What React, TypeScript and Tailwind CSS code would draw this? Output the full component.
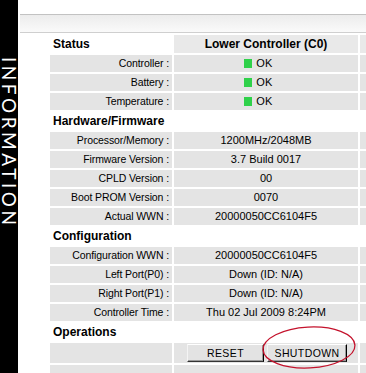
import type { ReactNode } from 'react'

type Item =
  | { kind: 'section'; title: string }
  | { kind: 'data'; label: string; value: string; ok?: boolean }

const items: Item[] = [
  { kind: 'data', label: 'Controller :', value: 'OK', ok: true },
  { kind: 'data', label: 'Battery :', value: 'OK', ok: true },
  { kind: 'data', label: 'Temperature :', value: 'OK', ok: true },
  { kind: 'section', title: 'Hardware/Firmware' },
  { kind: 'data', label: 'Processor/Memory :', value: '1200MHz/2048MB' },
  { kind: 'data', label: 'Firmware Version :', value: '3.7 Build 0017' },
  { kind: 'data', label: 'CPLD Version :', value: '00' },
  { kind: 'data', label: 'Boot PROM Version :', value: '0070' },
  { kind: 'data', label: 'Actual WWN :', value: '20000050CC6104F5' },
  { kind: 'section', title: 'Configuration' },
  { kind: 'data', label: 'Configuration WWN :', value: '20000050CC6104F5' },
  { kind: 'data', label: 'Left Port(P0) :', value: 'Down (ID: N/A)' },
  { kind: 'data', label: 'Right Port(P1) :', value: 'Down (ID: N/A)' },
  { kind: 'data', label: 'Controller Time :', value: 'Thu 02 Jul 2009 8:24PM' },
  { kind: 'section', title: 'Operations' },
]

function Section({ title }: { title: string }) {
  return (
    <>
      <div className="h-[18px] flex items-center pl-[3px] text-[12px] font-bold">{title}</div>
      <div className="h-[18px]" />
      <div className="h-[18px]" />
    </>
  )
}

function Data({ label, children }: { label: string; children: ReactNode }) {
  return (
    <>
      <div className="h-[17px] bg-[#e4e4e4] flex items-center justify-end pr-[3px] text-[10.5px] tracking-[-0.1px]">{label}</div>
      <div className="h-[17px] bg-[#e4e4e4] flex items-center justify-center text-[11px]">{children}</div>
      <div className="h-[17px] bg-[#e4e4e4]" />
    </>
  )
}

function Btn({ label, width }: { label: string; width: string }) {
  return (
    <button
      className={`${width} h-[18px] bg-[#e3e3e3] border border-t-white border-l-[#f4f4f4] border-r-black border-b-[#333] shadow-[inset_-1px_-1px_0_#9a9a9a] text-[10.5px] tracking-[0.4px] leading-none text-black`}
    >
      {label}
    </button>
  )
}

export default function App() {
  return (
    <div className="relative w-[366px] h-[373px] overflow-hidden bg-white flex font-['Liberation_Sans',Arial,sans-serif] text-black">
      <div className="w-[18px] shrink-0 bg-black flex justify-center pt-[57px]">
        <span className="[writing-mode:vertical-rl] text-white font-['Lato',sans-serif] font-normal text-[19px] tracking-[3.5px] leading-[16px]">
          INFORMATION
        </span>
      </div>

      <div className="ml-[2px] flex-1 flex flex-col min-w-0">
        <div className="h-[14px] shrink-0" />
        <div className="h-[19px] shrink-0 border-y border-t-[#c2c2c2] border-b-[#cfcfcf] bg-gradient-to-b from-[#ececec] to-[#fafafa]" />
        <div className="h-[2px] shrink-0" />

        <div className="ml-[30px] shrink-0 grid grid-cols-[122px_184px_40px] gap-[2px]">
          <div className="h-[18px] flex items-center pl-[3px] text-[12px] font-bold">Status</div>
          <div className="h-[18px] bg-[#e9e9e9] flex items-center justify-center text-[12px] font-bold">
            Lower Controller (C0)
          </div>
          <div className="h-[18px] bg-[#e9e9e9]" />

          {items.map((it, i) =>
            it.kind === 'section' ? (
              <Section key={i} title={it.title} />
            ) : (
              <Data key={i} label={it.label}>
                {it.ok ? (
                  <span className="flex items-center gap-[4px] pr-[15px]">
                    <span className="w-[8px] h-[9px] bg-[#2fd14a]" />
                    <span className="tracking-[0.4px]">{it.value}</span>
                  </span>
                ) : (
                  it.value
                )}
              </Data>
            )
          )}

          <div className="h-[20px] bg-[#e4e4e4]" />
          <div className="h-[20px] bg-[#e4e4e4] flex items-center justify-center gap-[3px] pl-[2px]">
            <Btn label="RESET" width="w-[77px]" />
            <Btn label="SHUTDOWN" width="w-[80px]" />
          </div>
          <div className="h-[20px] bg-[#e4e4e4]" />

          <div className="h-[17px] bg-[#e4e4e4]" />
          <div className="h-[17px] bg-[#e4e4e4]" />
          <div className="h-[17px] bg-[#e4e4e4]" />
        </div>
      </div>

      <svg className="absolute left-[258px] top-[322px] pointer-events-none" width="104" height="52" viewBox="0 0 104 52">
        <ellipse
          cx="51"
          cy="25.5"
          rx="46"
          ry="20.5"
          fill="none"
          stroke="#c4122c"
          strokeWidth="1.3"
          transform="rotate(-3 51 25.5)"
        />
      </svg>
    </div>
  )
}
